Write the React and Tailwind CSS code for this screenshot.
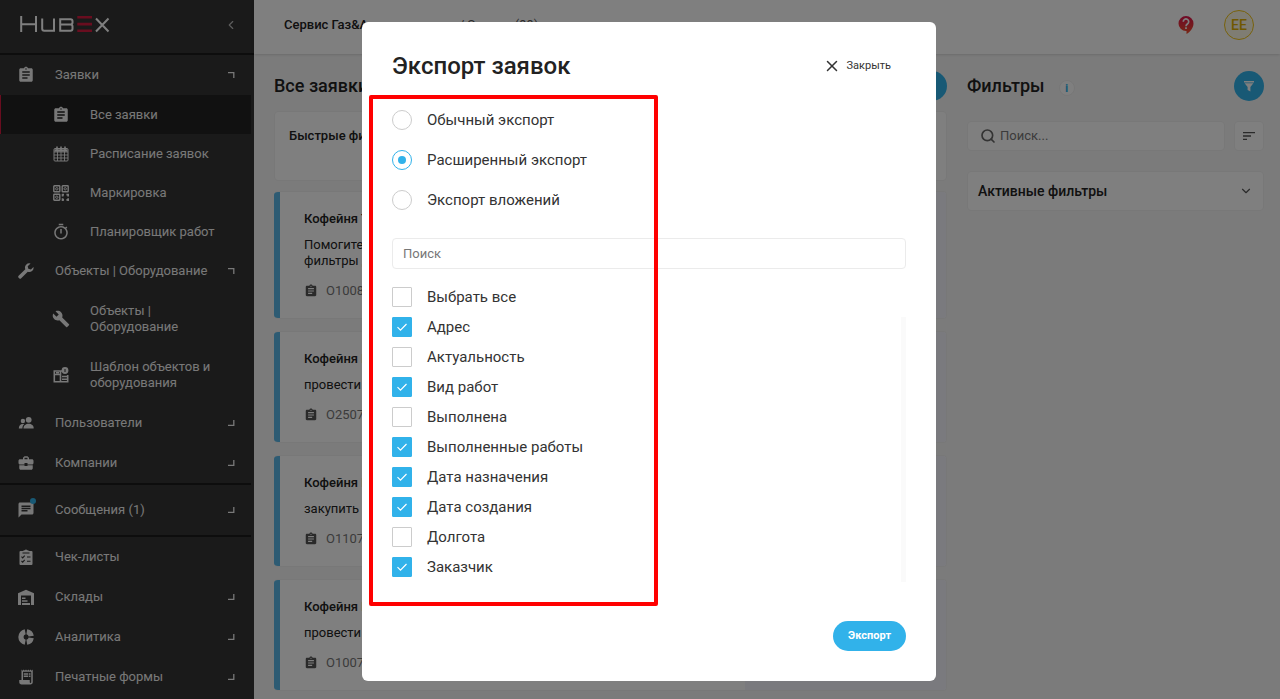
import { useState } from 'react';
import { MdAssignment, MdBuild, MdBusinessCenter, MdChat, MdOutlineTimer, MdReceiptLong, MdSort } from 'react-icons/md';
import { Search, ChevronDown, ChevronLeft, X } from 'lucide-react';

const CalendarIcon = () => (
  <svg viewBox="0 0 16 16" className="size-4" fill="none" stroke="currentColor">
    <rect x="1" y="2.5" width="14" height="12.5" rx="1" />
    <path d="M1 6h14M1 9h14M1 12h14M4.5 5v10M8 5v10M11.5 5v10" strokeWidth="0.9" />
    <path d="M1.5 4.5h13" strokeWidth="2.4" />
    <path d="M4 .5v3.5M8 .5v3.5M12 .5v3.5" strokeWidth="1.6" />
  </svg>
);

const MarkingIcon = () => (
  <svg viewBox="0 0 16 16" className="size-4" fill="none" stroke="currentColor">
    <rect x=".8" y=".8" width="6" height="6" rx=".6" strokeWidth="1.4" />
    <rect x="9.2" y=".8" width="6" height="6" rx=".6" strokeWidth="1.4" />
    <rect x=".8" y="9.2" width="6" height="6" rx=".6" strokeWidth="1.4" />
    <circle cx="3.8" cy="3.8" r="1.2" />
    <circle cx="12.2" cy="3.8" r="1.2" />
    <circle cx="3.8" cy="12.2" r="1.2" />
    <path
      d="M8.8 9.6H11M13.4 9.6H16M8.8 14.8H11M13.4 14.8H16M9.6 9v2.5M15.2 9v2.5M9.6 13.2V16M15.2 13.2V16"
      strokeWidth="1.8"
    />
  </svg>
);

const WrenchIcon = () => (
  <svg viewBox="0 0 16 16" className="size-4" fill="currentColor">
    <path d="M12.6.6a4.3 4.3 0 0 0-5.3 5.7L.6 12.8a1.4 1.4 0 0 0 0 1.9l.6.6a1.4 1.4 0 0 0 2 0l6.6-6.5A4.3 4.3 0 0 0 15.5 4l-2.6 2.4-2.6-.6-.6-2.5z" />
  </svg>
);

const TemplateIcon = () => (
  <svg viewBox="0 0 16 16" className="size-4" fill="none" stroke="currentColor">
    <path d="M9 4H1.3v10.8h13.4V8" strokeWidth="1.6" />
    <path d="M7.5 4v11M1.5 7.5h6M9 9.5h5M9 12.2h5M3 5.7h3" strokeWidth="1.6" />
    <circle cx="12" cy="3.5" r="3.4" fill="currentColor" stroke="none" />
    <path d="M12 2v3" stroke="#333" strokeWidth="1" />
  </svg>
);

const UsersIcon = () => (
  <svg viewBox="0 0 16 16" className="size-4" fill="currentColor">
    <circle cx="10.7" cy="4.8" r="2.9" />
    <path d="M5.5 13.5c0-3.2 2.5-4.7 5.2-4.7s5 1.5 5 4.7z" />
    <circle cx="4.9" cy="6" r="2.2" />
    <path d="M.8 13.5c0-2.6 1.5-4.3 4-4.4.6 0 1 .1 1.4.2-1.2 1-1.8 2.4-1.8 4.2z" />
  </svg>
);

const ChecklistIcon = () => (
  <svg viewBox="0 0 16 16" className="size-4">
    <path
      fill="currentColor"
      d="M2.5 2h3v-.8h1.2a1.5 1.5 0 0 1 2.6 0h1.2V2h3a1 1 0 0 1 1 1v12a1 1 0 0 1-1 1h-11a1 1 0 0 1-1-1V3a1 1 0 0 1 1-1z"
    />
    <path
      fill="none"
      stroke="#333"
      strokeWidth="1.1"
      d="M4.5 4h7M3.5 7.7l1.2 1.2 2-2.3M3.5 12l1.2 1.2 2-2.3M9 8h3.5M9 12.3h3.5"
    />
  </svg>
);

const WarehouseIcon = () => (
  <svg viewBox="0 0 16 16" className="size-4" fill="currentColor">
    <path d="M0 4.2 8 .8l8 3.4V16h-3V6.5H3V16H0z" />
    <path d="M4 8.5h3.5V10H4zM4 11.2h5.5v1.5H4zM4 14h8v2H4z" />
  </svg>
);

const DonutIcon = () => (
  <svg viewBox="0 0 16 16" className="size-4" fill="none" stroke="currentColor" strokeWidth="5.2">
    <path d="M7.2 13.2A5.3 5.3 0 0 1 7.2 2.8M8.8 2.8a5.3 5.3 0 0 1 4.4 4.4M13.2 8.8a5.3 5.3 0 0 1-4.4 4.4" />
  </svg>
);

const HelpIcon = () => (
  <svg viewBox="0 0 16 18" className="h-[18px] w-4">
    <defs>
      <linearGradient id="help-fill" x1="0" y1="0" x2="0" y2="1">
        <stop offset="0" stopColor="#e0134e" />
        <stop offset="1" stopColor="#f0502a" />
      </linearGradient>
    </defs>
    <path
      fill="url(#help-fill)"
      d="M8 0a7.5 7.5 0 0 1 7.5 7.5c0 4.5-3.5 8.5-7 10.5v-3H8A7.5 7.5 0 0 1 8 0z"
    />
    <path
      fill="none"
      stroke="#fff"
      strokeWidth="1.7"
      d="M5.3 5.7a2.7 2.7 0 1 1 4.3 2.1C8.5 8.6 8 9 8 10.2M8 11.3V13"
    />
  </svg>
);

const FunnelIcon = () => (
  <svg viewBox="0 0 12 12" className="size-3" fill="currentColor">
    <path d="M1 1h10v1.5H1zM1.6 3.2h8.8L7.4 7v4.5L4.6 10V7z" />
  </svg>
);

const Corner = ({ open }) => (
  <svg viewBox="0 0 8 8" className="size-2 shrink-0" fill="none" stroke="currentColor" strokeWidth="1.3">
    {open ? <path d="M1 1.7h5.8V7" /> : <path d="M1 6.3h5.8V1" />}
  </svg>
);

const Logo = () => (
  <svg viewBox="0 0 90 17" className="h-[17px] w-[90px]" fill="none" strokeWidth="2">
    <g stroke="#fff">
      <path d="M1.2 0v16M16 0v16M1.2 8.3H16" />
      <path d="M22.2 2.5v10.3a2 2 0 0 0 2 2H34V2.5" />
      <path d="M40.2 3.3h10.3a2 2 0 0 1 2 2v1.2a2 2 0 0 1-2 2H40.2M50.5 8.5a2 2 0 0 1 2 2v2.3a2 2 0 0 1-2 2H40.2V2.3" />
      <path d="M76 2.5l12.5 13M88.5 2.5l-12.5 13" />
    </g>
    <path d="M57.3 1.3H72M57.3 8.1H72M57.3 14.7H72" stroke="#d31a3f" strokeWidth="2.6" />
  </svg>
);

const topMenu = [
  { label: 'Заявки', icon: <MdAssignment />, open: true },
  { label: 'Все заявки', icon: <MdAssignment />, child: true, active: true },
  { label: 'Расписание заявок', icon: <CalendarIcon />, child: true },
  { label: 'Маркировка', icon: <MarkingIcon />, child: true },
  { label: 'Планировщик работ', icon: <MdOutlineTimer />, child: true },
  { label: 'Объекты | Оборудование', icon: <WrenchIcon />, open: true },
  { label: 'Объекты | Оборудование', icon: <MdBuild />, child: true, tall: true },
  { label: 'Шаблон объектов и оборудования', icon: <TemplateIcon />, child: true, tall: true },
  { label: 'Пользователи', icon: <UsersIcon />, open: false },
  { label: 'Компании', icon: <MdBusinessCenter />, open: false },
];

const messages = { label: 'Сообщения (1)', icon: <MdChat />, open: false, badge: true };

const bottomMenu = [
  { label: 'Чек-листы', icon: <ChecklistIcon /> },
  { label: 'Склады', icon: <WarehouseIcon />, open: false },
  { label: 'Аналитика', icon: <DonutIcon />, open: false },
  { label: 'Печатные формы', icon: <MdReceiptLong />, open: false },
];

const requests = [
  { title: 'Кофейня Тверская', text: ['Помогите настроить', 'фильтры для заявок'], number: 'O1008' },
  { title: 'Кофейня Победы', text: ['провести осмотр'], number: 'O2507' },
  { title: 'Кофейня Победы', text: ['закупить расходники'], number: 'O1107' },
  { title: 'Кофейня Победы', text: ['провести осмотр'], number: 'O1007' },
];

const exportTypes = ['Обычный экспорт', 'Расширенный экспорт', 'Экспорт вложений'];

const columns = [
  'Адрес',
  'Актуальность',
  'Вид работ',
  'Выполнена',
  'Выполненные работы',
  'Дата назначения',
  'Дата создания',
  'Долгота',
  'Заказчик',
];

const rowHeight = (item) => {
  if (item.tall) return 'h-14';
  return item.child ? 'h-[39px]' : 'h-10';
};

const MenuItem = ({ item }) => (
  <a
    href="#"
    className={`flex items-center pr-4 ${rowHeight(item)} ${item.child ? 'border-l pl-[52px]' : 'pl-[18px]'} ${
      item.active ? 'border-[#d31a3f] bg-[#222]' : 'border-transparent'
    }`}
  >
    <span className="relative flex size-4 shrink-0 items-center justify-center text-lg">
      <span className="shrink-0">{item.icon}</span>
      {item.badge && <span className="absolute -top-1 -right-0.5 size-[6px] rounded-full bg-[#31b2ea]" />}
    </span>
    <span className="ml-[21px] flex-1">{item.label}</span>
    {item.open !== undefined && <Corner open={item.open} />}
  </a>
);

const Sidebar = () => (
  <aside className="w-[254px] shrink-0 bg-[#343434] text-[13px] leading-4 text-[#f0f0f0]">
    <div className="flex h-[55px] items-center justify-between border-b-2 border-[#1a1a1a] pr-4 pb-1 pl-5">
      <Logo />
      <button type="button" aria-label="Свернуть меню" className="text-[#bbb]">
        <ChevronLeft size={14} />
      </button>
    </div>
    <nav className="mr-[3px]">
      {topMenu.map((item, i) => (
        <MenuItem key={i} item={item} />
      ))}
      <div className="border-y-2 border-[#1a1a1a] py-[5px]">
        <MenuItem item={messages} />
      </div>
      {bottomMenu.map((item) => (
        <MenuItem key={item.label} item={item} />
      ))}
    </nav>
  </aside>
);

const Header = () => (
  <header className="flex h-[54px] shrink-0 items-center justify-between bg-white pr-[26px] pb-[5px] pl-[30px] shadow">
    <p className="text-[13px] font-medium">
      Сервис Газ&amp;Автоматизация <span className="font-normal text-[#555]">/ Заявки (99)</span>
    </p>
    <div className="flex items-center gap-[30px]">
      <a href="#" aria-label="Помощь">
        <HelpIcon />
      </a>
      <button
        type="button"
        className="size-[30px] rounded-full border border-[#f0c419] bg-[#fffbe6] text-sm font-medium text-[#e0b000]"
      >
        ЕЕ
      </button>
    </div>
  </header>
);

const RequestCard = ({ request }) => (
  <article className="flex overflow-hidden rounded border border-l-0 border-[#f0f0f0] bg-white">
    <div className="w-[6px] bg-[#5bb6e6]" />
    <div className="flex-1 px-6 pt-[19px] pb-[17px] text-[13px] leading-4">
      <h3 className="font-medium">{request.title}</h3>
      <div className="mt-[10px]">
        {request.text.map((line) => (
          <p key={line}>{line}</p>
        ))}
      </div>
      <p className="mt-3 flex h-5 items-center gap-2 text-[#777]">
        <MdAssignment size={14} className="text-[#555]" />
        {request.number}
      </p>
    </div>
    <div className="w-[201px] bg-[#f4f5fd]" />
  </article>
);

const Requests = () => (
  <section className="flex min-w-0 flex-1 flex-col">
    <div className="flex h-[30px] items-center justify-between">
      <h1 className="text-lg font-medium">Все заявки</h1>
      <button type="button" aria-label="Добавить заявку" className="size-[30px] rounded-full bg-[#31b2ea]" />
    </div>
    <div className="mt-[10px] h-[70px] rounded border border-[#f0f0f0] bg-white px-[14px] py-4 text-[13px] leading-4 font-medium">
      Быстрые фильтры
    </div>
    <div className="mt-[10px] flex flex-col gap-3">
      {requests.map((request) => (
        <RequestCard key={request.number} request={request} />
      ))}
    </div>
  </section>
);

const Filters = () => (
  <section className="w-[297px] shrink-0">
    <div className="flex h-[30px] items-center">
      <h2 className="text-lg font-medium">Фильтры</h2>
      <span className="mt-1 ml-[14px] flex size-4 items-center justify-center rounded-full border border-[#eee] bg-white text-[10px] font-black text-[#31b2ea]">
        i
      </span>
      <button
        type="button"
        aria-label="Применить фильтр"
        className="ml-auto flex size-[30px] items-center justify-center rounded-full bg-[#31b2ea] text-white"
      >
        <FunnelIcon />
      </button>
    </div>
    <div className="mt-5 flex gap-[9px]">
      <label className="flex h-[30px] min-w-0 flex-1 items-center gap-1 rounded-sm border border-[#f0f0f0] bg-white px-3 text-[#666]">
        <Search size={16} strokeWidth={2.5} />
        <input
          type="text"
          aria-label="Поиск заявок"
          placeholder="Поиск..."
          className="min-w-0 flex-1 text-[13px] outline-none placeholder:text-[#777]"
        />
      </label>
      <button
        type="button"
        aria-label="Сортировка"
        className="flex size-[30px] items-center justify-center rounded-sm border border-[#f0f0f0] bg-white text-[#555]"
      >
        <MdSort size={16} />
      </button>
    </div>
    <button
      type="button"
      className="mt-5 flex h-10 w-full items-center justify-between rounded border border-[#f0f0f0] bg-white px-[10px] pb-px text-sm font-medium"
    >
      Активные фильтры
      <ChevronDown size={14} className="text-[#555]" />
    </button>
  </section>
);

const Checkbox = ({ label, checked, onChange }) => (
  <label className="flex h-[30px] items-center gap-[15px]">
    <span className="relative flex size-5">
      <input
        type="checkbox"
        checked={checked}
        onChange={onChange}
        className="peer size-5 appearance-none rounded-[1px] border border-[#ccc] bg-white checked:border-[#31b2ea] checked:bg-[#31b2ea]"
      />
      <svg
        viewBox="0 0 20 20"
        className="pointer-events-none absolute inset-0 hidden size-5 peer-checked:block"
        fill="none"
        stroke="#fff"
        strokeWidth="1.2"
      >
        <path d="M5.5 10.2l3 3 6-6.2" />
      </svg>
    </span>
    {label}
  </label>
);

const ExportModal = () => {
  const [type, setType] = useState('Расширенный экспорт');
  const [search, setSearch] = useState('');
  const [selected, setSelected] = useState([
    'Адрес',
    'Вид работ',
    'Выполненные работы',
    'Дата назначения',
    'Дата создания',
    'Заказчик',
  ]);

  const toggle = (name) => {
    setSelected(selected.includes(name) ? selected.filter((s) => s !== name) : [...selected, name]);
  };

  const allSelected = selected.length === columns.length;

  return (
    <div
      role="dialog"
      aria-labelledby="export-title"
      className="relative w-full max-w-[574px] rounded-md bg-white px-[30px] pt-7 pb-[30px] text-[#333]"
    >
      <div className="flex h-8 items-center justify-between pr-[15px]">
        <h2 id="export-title" className="text-2xl font-medium text-[#222]">
          Экспорт заявок
        </h2>
        <button type="button" className="flex items-center gap-[6px] text-[11px]">
          <X size={18} />
          Закрыть
        </button>
      </div>

      <div className="mt-[18px] text-[15px]">
        {exportTypes.map((name) => (
          <label key={name} className="flex h-10 items-center gap-[15px]">
            <input
              type="radio"
              name="export-type"
              checked={type === name}
              onChange={() => setType(name)}
              className="flex size-5 appearance-none items-center justify-center rounded-full border border-[#ccc] before:size-2 before:rounded-full checked:border-[#31b2ea] checked:before:bg-[#31b2ea]"
            />
            {name}
          </label>
        ))}
      </div>

      <input
        type="text"
        aria-label="Поиск"
        placeholder="Поиск"
        value={search}
        onChange={(e) => setSearch(e.target.value)}
        className="mt-[18px] h-[31px] w-full rounded-sm border border-[#ebebeb] px-[10px] text-[13px] outline-none placeholder:text-[#777]"
      />

      <div className="mt-[13px] text-[15px]">
        <Checkbox
          label="Выбрать все"
          checked={allSelected}
          onChange={() => setSelected(allSelected ? [] : columns)}
        />
        <div className="flex justify-between">
          <div>
            {columns
              .filter((name) => name.toLowerCase().includes(search.toLowerCase()))
              .map((name) => (
                <Checkbox key={name} label={name} checked={selected.includes(name)} onChange={() => toggle(name)} />
              ))}
          </div>
          <div className="mt-[5px] w-[5px] bg-[#fafafa]" />
        </div>
      </div>

      <div className="mt-[39px] flex justify-end">
        <button type="button" className="h-[30px] rounded-full bg-[#31b2ea] px-[15px] text-[11px] font-bold text-white">
          Экспорт
        </button>
      </div>

      <div className="pointer-events-none absolute top-[73px] left-[7px] h-[511px] w-[289px] rounded-xs border-4 border-[#f00]" />
    </div>
  );
};

const App = () => {
  return (
    <div className="flex h-screen overflow-hidden bg-[#f7f7f7] font-[Roboto,sans-serif] text-[#222]">
      <Sidebar />
      <div className="flex min-w-0 flex-1 flex-col">
        <Header />
        <main className="flex gap-5 pt-[17px] pr-4 pl-5">
          <Requests />
          <Filters />
        </main>
      </div>
      <div className="fixed inset-0 flex items-start justify-center overflow-hidden bg-black/50 pt-[22px] pl-[18px]">
        <ExportModal />
      </div>
    </div>
  );
};

export default App;
